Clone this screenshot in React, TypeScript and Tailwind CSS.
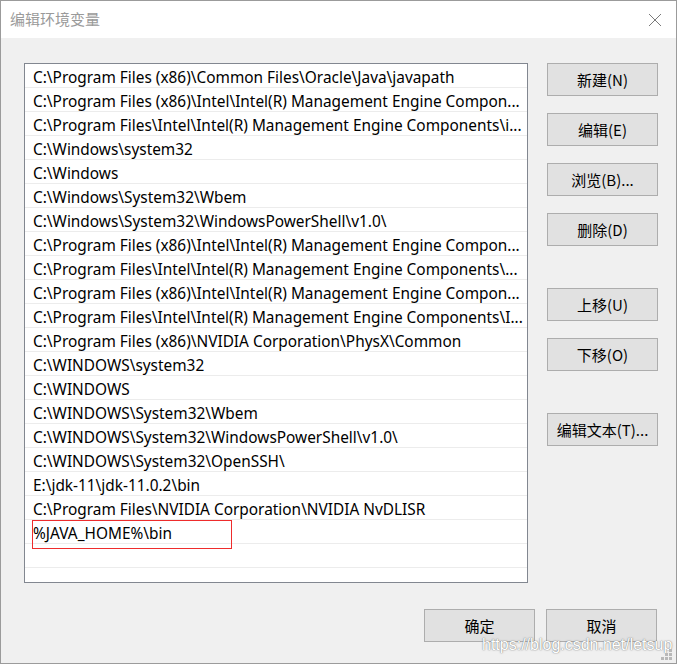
import React from "react";

const paths = [
  "C:\\Program Files (x86)\\Common Files\\Oracle\\Java\\javapath",
  "C:\\Program Files (x86)\\Intel\\Intel(R) Management Engine Compon...",
  "C:\\Program Files\\Intel\\Intel(R) Management Engine Components\\i...",
  "C:\\Windows\\system32",
  "C:\\Windows",
  "C:\\Windows\\System32\\Wbem",
  "C:\\Windows\\System32\\WindowsPowerShell\\v1.0\\",
  "C:\\Program Files (x86)\\Intel\\Intel(R) Management Engine Compon...",
  "C:\\Program Files\\Intel\\Intel(R) Management Engine Components\\...",
  "C:\\Program Files (x86)\\Intel\\Intel(R) Management Engine Compon...",
  "C:\\Program Files\\Intel\\Intel(R) Management Engine Components\\I...",
  "C:\\Program Files (x86)\\NVIDIA Corporation\\PhysX\\Common",
  "C:\\WINDOWS\\system32",
  "C:\\WINDOWS",
  "C:\\WINDOWS\\System32\\Wbem",
  "C:\\WINDOWS\\System32\\WindowsPowerShell\\v1.0\\",
  "C:\\WINDOWS\\System32\\OpenSSH\\",
  "E:\\jdk-11\\jdk-11.0.2\\bin",
  "C:\\Program Files\\NVIDIA Corporation\\NVIDIA NvDLISR",
  "%JAVA_HOME%\\bin",
  "",
  "",
];

const WinButton = ({ label, className = "" }: { label: string; className?: string }) => (
  <button
    className={
      "w-[111px] h-[33px] bg-[#e1e1e1] border border-[#adadad] text-[15px] text-black leading-none " +
      className
    }
  >
    {label}
  </button>
);

export default function App() {
  return (
    <div
      className="w-[677px] h-[664px] bg-[#f0f0f0] border border-[#9b9b9b] flex flex-col relative overflow-hidden"
      style={{ fontFamily: '"Noto Sans", "Noto Sans CJK SC", sans-serif' }}
    >
      {/* title bar */}
      <div className="h-[37px] bg-white flex items-center justify-between pl-[9px] pr-[14px] shrink-0">
        <span
          className="text-[15px] text-[#9a9a9a]"
          style={{ fontFamily: '"Noto Sans CJK SC", sans-serif' }}
        >
          编辑环境变量
        </span>
        <svg width="14" height="14" viewBox="0 0 14 14" className="mt-[1px]">
          <path d="M1 1 L13 13 M13 1 L1 13" stroke="#7a7a7a" strokeWidth="1" fill="none" />
        </svg>
      </div>

      <div className="flex pt-[25px] pl-[23px]">
        {/* list */}
        <div className="relative w-[504px] h-[520px] bg-white border border-[#828790] overflow-hidden">
          {paths.map((p, i) => (
            <div
              key={i}
              className="h-[24px] border-b border-[#ececec] pl-[8px] pt-[4px] flex items-center text-[15.4px] text-black whitespace-nowrap overflow-hidden"
            >
              {p}
            </div>
          ))}
          <div className="absolute left-[7px] top-[456px] w-[200px] h-[29px] border border-[#ee2c2c]" />
        </div>

        {/* side buttons */}
        <div
          className="ml-[19px] flex flex-col gap-[17px]"
          style={{ fontFamily: '"Noto Sans CJK SC", sans-serif' }}
        >
          <WinButton label="新建(N)" />
          <WinButton label="编辑(E)" />
          <WinButton label="浏览(B)..." />
          <WinButton label="删除(D)" />
          <WinButton label="上移(U)" className="mt-[25px]" />
          <WinButton label="下移(O)" />
          <WinButton label="编辑文本(T)..." className="mt-[25px]" />
        </div>
      </div>

      {/* bottom buttons */}
      <div
        className="flex justify-end gap-[11px] pr-[19px] pt-[26px]"
        style={{ fontFamily: '"Noto Sans CJK SC", sans-serif' }}
      >
        <WinButton label="确定" />
        <WinButton label="取消" />
      </div>

      {/* watermark */}
      <div
        className="absolute left-[481px] top-[636px] text-[16px] leading-none text-white"
        style={{
          fontFamily: '"Liberation Sans", sans-serif',
          textShadow: "0 0 1px rgba(90,90,90,0.9), 0 0 2px rgba(120,120,120,0.5)",
        }}
      >
        https://blog.csdn.net/letsup
      </div>

      {/* size grip */}
      <svg width="12" height="12" viewBox="0 0 12 12" className="absolute right-[3px] bottom-[2px]">
        <rect x="8" y="0" width="3" height="3" fill="#b8b8b8" />
        <rect x="4" y="4" width="3" height="3" fill="#b8b8b8" />
        <rect x="8" y="4" width="3" height="3" fill="#b8b8b8" />
        <rect x="0" y="8" width="3" height="3" fill="#b8b8b8" />
        <rect x="4" y="8" width="3" height="3" fill="#b8b8b8" />
        <rect x="8" y="8" width="3" height="3" fill="#b8b8b8" />
      </svg>
    </div>
  );
}
